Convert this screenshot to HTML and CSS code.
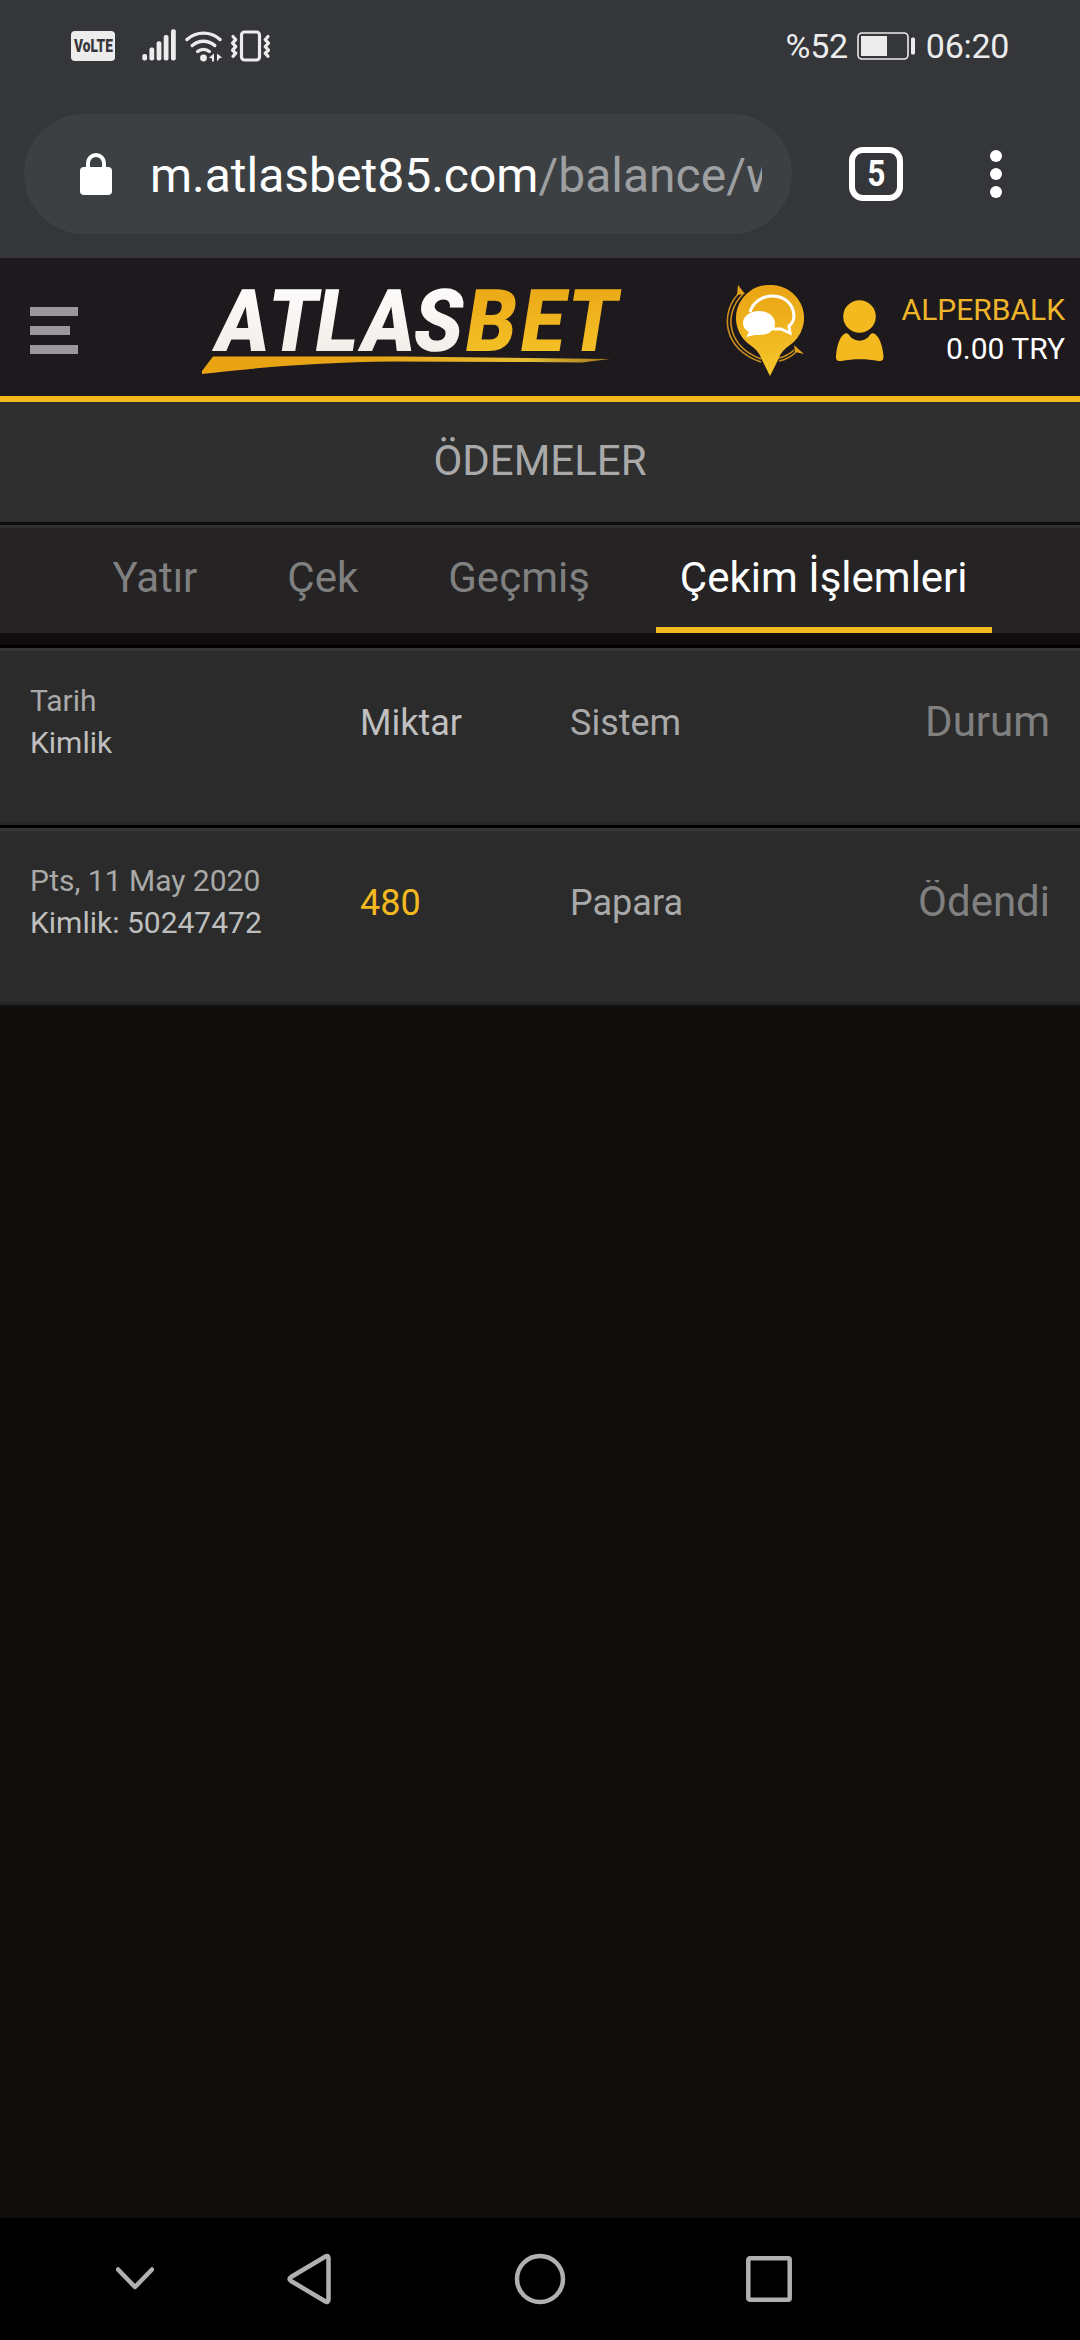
FILE: index.html
```
<!DOCTYPE html>
<html lang="tr">
<head>
    <meta charset="UTF-8">
    <meta name="viewport" content="width=device-width, initial-scale=1.0">
    <title>Atlasbet - Ödemeler</title>
    <link rel="stylesheet" href="styles.css">
</head>
<body>
    <div class="status-bar">
        <div class="status-left">
            <div class="volte"><span>VoLTE</span></div>
            <svg class="signal" width="35" height="32" viewBox="0 0 35 32">
                <rect x="0.3" y="25" width="4.8" height="6.5" rx="2"/>
                <rect x="7.4" y="18.5" width="4.8" height="13" rx="2"/>
                <rect x="14.6" y="12.3" width="4.8" height="19.2" rx="2"/>
                <rect x="21.7" y="6" width="4.8" height="25.5" rx="2"/>
                <rect x="29" y="0.3" width="4.8" height="31.2" rx="2"/>
            </svg>
            <svg class="wifi" width="38" height="32" viewBox="0 0 38 32">
                <g fill="none" stroke="#ececec" stroke-width="3.4" stroke-linecap="round">
                    <path d="M2 9.5A24.500 24.500 0 0 1 35 9.500"/>
                    <path d="M7.200 15.500A17 17 0 0 1 29.800 15.500"/>
                    <path d="M12.600 21.500A9.200 9.200 0 0 1 24.400 21.500"/>
                </g>
                <circle cx="18.500" cy="28" r="3.400"/>
                <path d="M29 23.500v8h-2v-3l-3-.8zM32 23.500l5.500 4.200h-2.500l-3 3.800z"/>
            </svg>
            <svg class="vibrate" width="42" height="32" viewBox="0 0 42 32">
                <g fill="none" stroke="#ececec" stroke-width="3.2" stroke-linecap="round" stroke-linejoin="round">
                    <rect x="11.500" y="2" width="18" height="28" rx="3"/>
                    <path d="M3 6.500l2.800 3.200-3.300 3.500 3.300 3.500-3.300 3.500 3.300 3-2.800 3.200"/>
                    <path d="M38 6.500l-2.800 3.200 3.300 3.500-3.300 3.500 3.300 3.500-3.300 3 2.800 3.200"/>
                </g>
            </svg>
        </div>
        <div class="status-right">
            <span>%52</span>
            <svg class="battery" width="59" height="28" viewBox="0 0 59 28">
                <rect x="1" y="1" width="50" height="26" rx="4" fill="none" stroke="#ececec" stroke-width="1.600"/>
                <rect x="4" y="4" width="26" height="20"/>
                <rect x="54" y="5.500" width="4" height="17" rx="1.500"/>
            </svg>
            <span>06:20</span>
        </div>
    </div>

    <div class="browser-bar">
        <div class="url-box">
            <svg class="lock" width="32" height="42" viewBox="0 0 32 42">
                <rect x="0" y="14" width="32" height="28" rx="4"/>
                <path d="M8 15v-5a8 8 0 0 1 16 0v5" fill="none" stroke="#fff" stroke-width="4"/>
            </svg>
            <div class="url">m.atlasbet85.com<span>/balance/w</span></div>
        </div>
        <div class="tab-count"><span>5</span></div>
        <svg class="dots" width="12" height="48" viewBox="0 0 12 48">
            <circle cx="6" cy="6" r="6"/>
            <circle cx="6" cy="24" r="6"/>
            <circle cx="6" cy="42" r="6"/>
        </svg>
    </div>

    <header>
        <div class="menu-btn">
            <span></span>
            <span class="short"></span>
            <span></span>
        </div>
        <svg class="logo" width="428" height="108" viewBox="0 0 428 108">
            <defs>
                <linearGradient id="silver" x1="0" y1="0" x2="0" y2="1">
                    <stop offset="0" stop-color="#ffffff"/>
                    <stop offset="1" stop-color="#efebe4"/>
                </linearGradient>
                <linearGradient id="gold" x1="0" y1="0" x2="0" y2="1">
                    <stop offset="0" stop-color="#e9a313"/>
                    <stop offset="1" stop-color="#f6c72b"/>
                </linearGradient>
                <linearGradient id="ribbon" x1="0" y1="0" x2="1" y2="0">
                    <stop offset="0" stop-color="#eaa313"/>
                    <stop offset="0.4" stop-color="#e7a416"/>
                    <stop offset="0.8" stop-color="#e5bd32"/>
                    <stop offset="1" stop-color="#a27a1b"/>
                </linearGradient>
            </defs>
            <g class="logo-text" transform="translate(0 69) skewX(-9) scale(0.9 1)">
                <text fill="url(#silver)" x="11 69 122 173 231">ATLAS</text>
                <text fill="url(#gold)" x="289 350 402">BET</text>
            </g>
            <path fill="url(#ribbon)" d="M11 74.500H200L408 77 380 80.500 330 80 190 79.500C120 80.500 70 84 0 92V89z"/>
        </svg>
        <svg class="chat-pin" width="78" height="92" viewBox="0 0 78 92">
            <defs>
                <linearGradient id="pin" x1="0" y1="0" x2="0" y2="1">
                    <stop offset="0" stop-color="#e9a313"/>
                    <stop offset="1" stop-color="#f6c72b"/>
                </linearGradient>
            </defs>
            <g fill="none" stroke="#c98f1b" stroke-width="1.600">
                <path d="M14 7C-7 27-3 65 35 77"/>
                <path d="M17 9C-3 29 1 61 35 74"/>
                <path d="M53 76q10-2 17-9M53 73q9-2 15-8"/>
            </g>
            <path fill="#e2a119" d="M12 0l7 9-8 1zM68 60l10 9-9-2z"/>
            <path fill="url(#pin)" d="M44 0a33 33 0 0 1 20 60q-9 6-11 13l-9 18-9-18q-2-7-11-13a33 33 0 0 1 20-60z"/>
            <path fill="none" stroke="#fff" stroke-width="3" d="M24 27C30 7 60 5 67 25q3 11-4 16l1 7-9-4h-8"/>
            <path fill="#fff" d="M33 26c9 0 16 5 16 12.500S42 50 33 50l-4 0-9 2 3-5c-4-2-6-5-6-9C17 31 24 26 33 26z"/>
        </svg>
        <svg class="user-icon" width="48" height="62" viewBox="0 0 48 62">
            <circle cx="23.500" cy="16.500" r="16.300"/>
            <path d="M9 33.500c3-.8 4 1.500 6 4q8.500 6.500 17 0c2-2.500 3-4.800 6-4 5 2 9 13 9.500 23 0 4-1.500 5-5 4.500-12-2.200-25-2.200-37 0-4 .5-5.500-.5-5.500-4.500C.5 46.500 4 35.500 9 33.500z"/>
        </svg>
        <div class="account">
            <div class="user-name">ALPERBALK</div>
            <div>0.00 TRY</div>
        </div>
    </header>

    <div class="page-title">ÖDEMELER</div>

    <nav class="tabs">
        <a>Yatır</a>
        <a>Çek</a>
        <a>Geçmiş</a>
        <a class="active">Çekim İşlemleri</a>
    </nav>

    <main>
        <div class="row">
            <div class="date">Tarih<b>Kimlik</b></div>
            <div class="amount">Miktar</div>
            <div class="system">Sistem</div>
            <div class="state">Durum</div>
        </div>
        <div class="row">
            <div class="date">Pts, 11 May 2020<b>Kimlik: 50247472</b></div>
            <div class="amount value">480</div>
            <div class="system">Papara</div>
            <div class="state">Ödendi</div>
        </div>
    </main>

    <div class="android-nav">
        <svg class="nav-down" width="38" height="24" viewBox="0 0 38 24">
            <path d="M2 2.500l17 17.500 17-17.500"/>
        </svg>
        <svg class="nav-back" width="44" height="52" viewBox="0 0 44 52">
            <path d="M41.500 5v42q-.5 3-3 1.500L4 28q-3-2 0-4L38.500 3.500q2.500-1.500 3 1.500z"/>
        </svg>
        <svg class="nav-home" width="52" height="52" viewBox="0 0 52 52">
            <circle cx="26" cy="26" r="23"/>
        </svg>
        <svg class="nav-recent" width="46" height="46" viewBox="0 0 46 46">
            <rect x="2.300" y="2.300" width="41.400" height="41.400" rx="1.500"/>
        </svg>
    </div>
</body>
</html>
```
FILE: styles.css
```
:root {
    --gold: #f4b91e;
    --chrome: #35363a;
    --status: #ececec;
}

body {
    margin: 0;
    width: 1080px;
    height: 2340px;
    display: flex;
    flex-direction: column;
    background-color: #110d0c;
    font-family: Roboto, "Noto Sans", sans-serif;
    overflow: hidden;
}

svg {
    display: block;
    flex: none;
}

/* phone status bar */
.status-bar {
    height: 92px;
    box-sizing: border-box;
    padding: 0 71px;
    display: flex;
    justify-content: space-between;
    align-items: center;
    background-color: var(--chrome);
    color: var(--status);
    fill: var(--status);
    font-size: 34px;
}

.status-left,
.status-right {
    display: flex;
    align-items: center;
}

.status-right {
    letter-spacing: -0.3px;
}

.volte {
    width: 44px;
    height: 30px;
    display: flex;
    justify-content: center;
    border-radius: 4px;
    background-color: var(--status);
    color: var(--chrome);
    font-size: 18px;
    font-weight: 900;
    line-height: 30px;
}

.volte span {
    transform: scaleX(0.76);
}

.signal {
    margin: -2px 0 0 27px;
}

.wifi {
    margin: -1px 0 0 8px;
}

.vibrate {
    margin: -1px 0 0 7px;
}

.battery {
    margin: 0 10px 0 9px;
}

/* browser toolbar */
.browser-bar {
    height: 166px;
    box-sizing: border-box;
    padding: 22px 0 24px 24px;
    display: flex;
    background-color: var(--chrome);
}

.url-box {
    width: 768px;
    height: 120px;
    box-sizing: border-box;
    padding: 0 30px 0 56px;
    display: flex;
    align-items: center;
    border-radius: 60px;
    background-color: #3c4043;
}

.lock {
    margin-top: -1px;
    fill: #fff;
}

.url {
    flex: 1;
    margin: 3px 0 0 38px;
    overflow: hidden;
    white-space: nowrap;
    color: #fff;
    font-size: 48px;
    line-height: 64px;
}

.url span {
    color: #9d9fa1;
}

.tab-count {
    width: 54px;
    height: 54px;
    box-sizing: border-box;
    margin: 33px 0 0 57px;
    border: 6px solid #fff;
    border-radius: 14px;
    color: #fff;
    font-size: 36px;
    font-weight: bold;
    line-height: 42px;
    text-align: center;
}

.tab-count span {
    display: inline-block;
    transform: scaleX(0.88);
}

.dots {
    margin: 36px 0 0 87px;
    fill: #fff;
}

/* site header */
header {
    height: 144px;
    box-sizing: border-box;
    padding: 0 15px 0 30px;
    display: flex;
    background-color: #1e191d;
    border-bottom: 6px solid var(--gold);
}

.menu-btn {
    width: 48px;
    margin-top: 49px;
    display: flex;
    flex-direction: column;
    gap: 10px;
}

.menu-btn span {
    height: 9px;
    background-color: #9b989c;
}

.menu-btn .short {
    width: 40px;
}

.logo {
    margin: 24px 0 0 124px;
}

.logo-text {
    font-size: 87px;
    font-weight: 900;
}

.chat-pin {
    margin: 27px 0 0 96px;
}

.user-icon {
    margin: 42px 0 0 32px;
    fill: var(--gold);
}

.account {
    margin: 32px 0 0 auto;
    text-align: right;
    color: #fff;
    font-size: 30px;
    line-height: 39px;
}

.user-name {
    color: #eeb52a;
}

.page-title {
    height: 120px;
    border-bottom: 3px solid #0e0d0d;
    background-color: #2f2f2f;
    color: #a9a9a9;
    font-size: 42px;
    line-height: 118px;
    text-align: center;
}

.tabs {
    height: 108px;
    box-sizing: border-box;
    border-top: 3px solid #312f30;
    margin-bottom: 12px;
    display: flex;
    justify-content: center;
    gap: 42px;
    background-color: #252324;
    color: #808080;
    font-size: 42px;
    line-height: 99px;
}

.tabs a {
    padding: 0 24px;
}

.tabs .active {
    color: #fff;
    border-bottom: 6px solid var(--gold);
}

/* withdrawal rows */
main {
    flex: 1;
}

.row {
    height: 180px;
    box-sizing: border-box;
    padding: 0 30px;
    display: grid;
    grid-template-columns: 330px 210px 1fr auto;
    border-top: 3px solid #000;
    border-bottom: 3px solid #252525;
    box-shadow: inset 0 3px #353535;
    background-color: #2b2b2b;
}

.date {
    padding-top: 32px;
    color: #a9a9a9;
    font-size: 30px;
    line-height: 42px;
}

.date b {
    display: block;
    color: #bfbfbf;
    font-weight: normal;
}

.amount,
.system {
    padding-top: 54px;
    color: #bfbfbf;
    font-size: 36px;
    line-height: 43px;
}

.system {
    color: #a9a9a9;
}

.value {
    color: var(--gold);
}

.state {
    height: 43px;
    margin-top: 52px;
    overflow: hidden;
    color: #808080;
    font-size: 42px;
    line-height: 43px;
}

/* phone navigation bar */
.android-nav {
    height: 122px;
    box-sizing: border-box;
    padding-left: 116px;
    display: flex;
    align-items: center;
    background-color: #000;
    fill: none;
    stroke: #b0b0b0;
    stroke-width: 4.5;
    stroke-linecap: round;
    stroke-linejoin: round;
}

.nav-back {
    margin-left: 133px;
}

.nav-home {
    margin-left: 183px;
}

.nav-recent {
    margin-left: 180px;
}
```
